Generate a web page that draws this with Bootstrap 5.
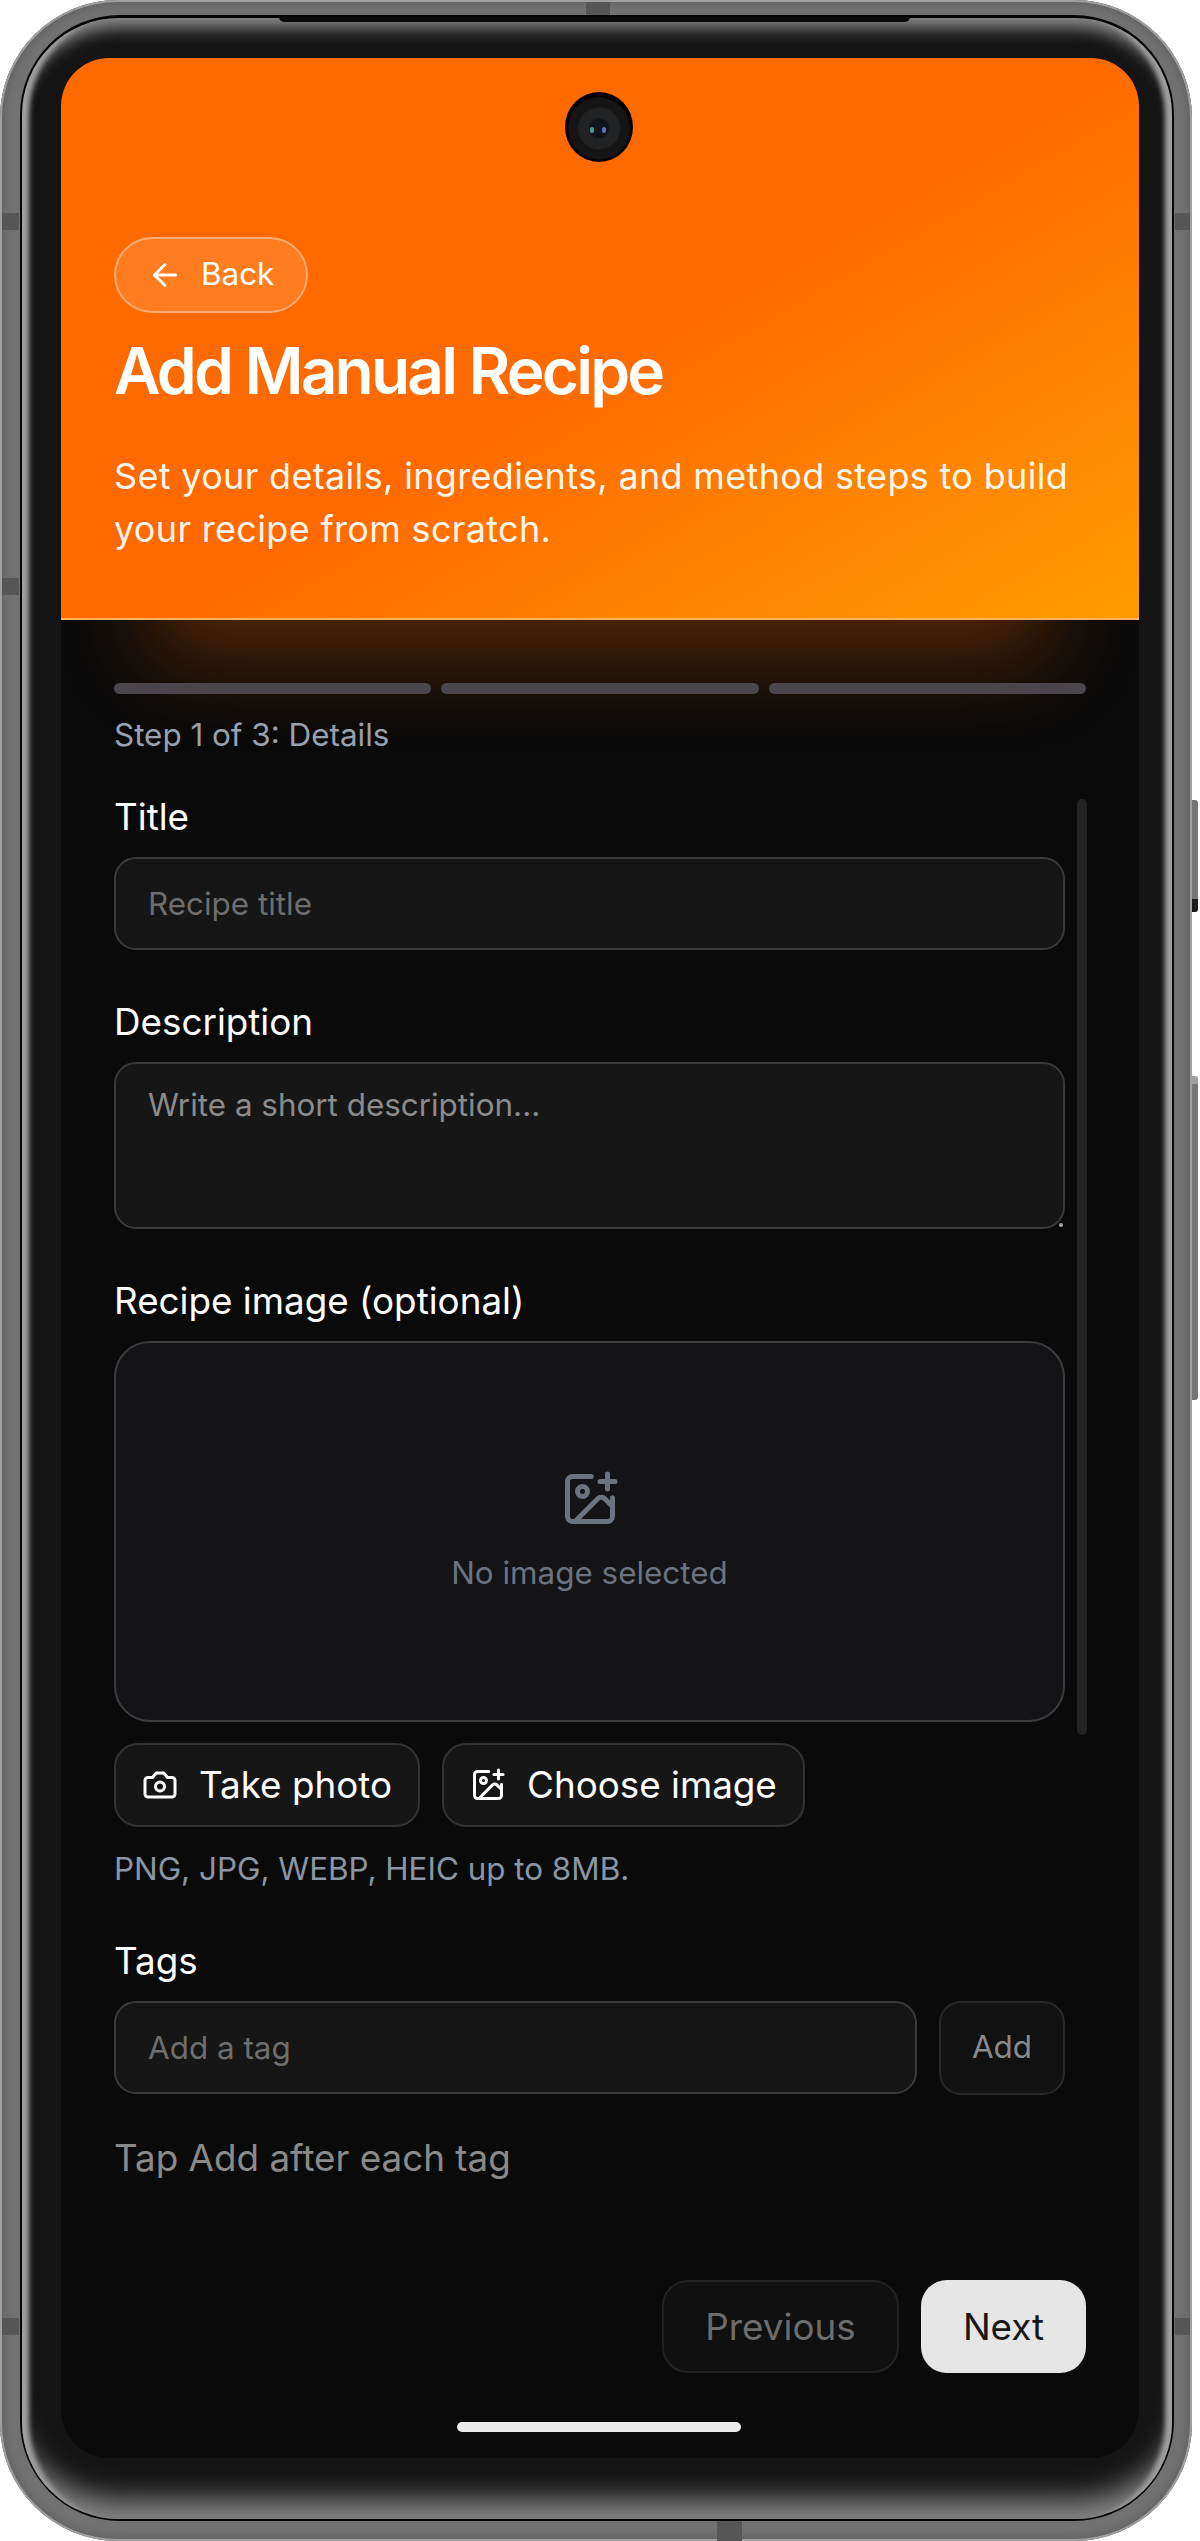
<!DOCTYPE html>
<html lang="en">

<head>
    <meta charset="UTF-8">
    <meta name="viewport" content="width=device-width, initial-scale=1.0">
    <title>Add Manual Recipe</title>
    <link href="https://cdn.jsdelivr.net/npm/bootstrap@5.3.0/dist/css/bootstrap.min.css" rel="stylesheet">
    <style>
        html, body { margin: 0; background: #fff; }
        body { font-family: Inter, "Liberation Sans", sans-serif; width: 1200px; height: 2541px; overflow: hidden; }

        .device-wrap { position: relative; width: 1192px; height: 2541px; }

        .side-key { position: absolute; left: 1192px; width: 6px; background: #767676; border-radius: 0 3px 3px 0; }
        .side-key.power { top: 800px; height: 112px; border-bottom: 13px solid #1c1c1c; }
        .side-key.volume { top: 1076px; height: 324px; border-top: 8px solid #a0a0a0; }

        .device-metal {
            position: relative; height: 100%; padding: 15px 18px 20px 20px;
            border-radius: 118px;
            background: #727272;
            box-shadow: inset 0 0 0 2px #a0a0a0, inset 0 0 10px 3px #5e5e5e;
        }
        .antenna { position: absolute; background: #565656; }
        .antenna.top-band { left: 586px; top: 2px; width: 24px; height: 13px; }
        .antenna.bottom-band { left: 717px; bottom: 0; width: 25px; height: 20px; }
        .antenna.left-a { left: 2px; top: 213px; width: 17px; height: 17px; }
        .antenna.left-b { left: 2px; top: 578px; width: 17px; height: 17px; }
        .antenna.left-c { left: 2px; top: 2318px; width: 17px; height: 17px; }
        .antenna.right-a { left: 1175px; top: 213px; width: 15px; height: 17px; }
        .antenna.right-b { left: 1175px; top: 2318px; width: 15px; height: 17px; }
        .top-notch { position: absolute; left: 279px; top: 17px; width: 631px; height: 5px; border-radius: 0 0 6px 6px; background: #0c0c0c; }

        .device-line { height: 100%; padding: 3px 2px 2px; border-radius: 100px; background: #050505; }
        .device-bezel {
            height: 100%; padding: 40px 33px 61px 39px;
            border-radius: 97px;
            background: #141414;
            box-shadow:
                inset 12px 0 5px -5px #a0a0a0,
                inset -12px 0 5px -5px #a0a0a0,
                inset 0 18px 16px -8px #8a8a8a,
                inset 0 -36px 28px -16px #858585;
        }

        .screen { position: relative; height: 100%; border-radius: 48px; background: #0a0a0a; color: #fff; overflow: hidden; display: flex; flex-direction: column; }

        .hero {
            height: 562px; padding: 179px 53px 0; flex-shrink: 0;
            background: linear-gradient(150deg, #ff6a00 52%, #ff9c00 100%);
            border-bottom: 2px solid #ffb35c;
            box-shadow: 0 130px 80px -90px rgba(255, 106, 0, .3);
        }
        .back-pill.btn {
            display: inline-flex; align-items: center; gap: 18px;
            height: 76px; padding: 0 32px 0 31px; color: #fff;
            font-size: 31.4px; line-height: 1;
            background: rgba(255, 255, 255, .12); border: 2px solid rgba(255, 255, 255, .38); border-radius: 38px;
        }
        .hero-title { font-size: 64px; font-weight: 600; line-height: 78px; letter-spacing: -2.8px; margin: 19px 0 0; color: #fff; }
        .hero-sub { font-size: 36px; line-height: 53px; letter-spacing: .33px; margin: 40px 0 0; color: rgba(255, 255, 255, .95); }

        .cam-hole { position: absolute; left: 504px; top: 34px; width: 68px; height: 70px; border-radius: 50%; background: radial-gradient(circle at 50% 52%, #111820 0, #0e141a 9px, #212224 11px, #212224 20px, #151516 22px, #151516 30px, #000 32px); }
        .cam-hole::before { content: ""; position: absolute; left: 25px; top: 35px; width: 4px; height: 6px; border-radius: 50%; background: #4d9a98; }
        .cam-hole::after { content: ""; position: absolute; left: 37px; top: 35px; width: 4px; height: 6px; border-radius: 50%; background: #5a78b5; }

        .form-area { flex: 1; padding: 63px 53px 0; min-height: 0; }
        .step-bars { display: flex; gap: 10px; }
        .step-seg { flex: 1; height: 11px; border-radius: 6px; background: #4a464b; }
        .step-text { font-size: 31.4px; line-height: 40px; color: #9aa1ae; margin: 21px 0 0; }
        .scroll-col { width: 951px; }

        .field-block { margin-top: 50px; }
        .field-block.first-block { margin-top: 40px; }
        .field-label { font-size: 36.8px; line-height: 44px; color: #fff; margin: 0 0 18px; display: block; font-weight: 400; }
        .dark-input.form-control {
            height: 93px; padding: 0 32px; font-size: 31.4px; color: #fff;
            background: #161616; border: 2px solid #3a3a3a; border-radius: 22px;
        }
        .dark-input.form-control::placeholder { color: #6e6e6e; opacity: 1; }
        .area-wrap { position: relative; }
        .area-wrap::after { content: ""; position: absolute; right: 2px; bottom: 2px; width: 4px; height: 4px; border-radius: 50%; background: #a8a8a8; }
        textarea.dark-input.form-control { height: 167px; padding: 21px 32px; line-height: 40px; resize: none; }
        textarea.dark-input.form-control::placeholder { color: #8b8b8b; }

        .image-box {
            height: 381px; border-radius: 36px; background: #141416; border: 2px solid #3c3c40;
            display: flex; flex-direction: column; align-items: center; color: #6b7280;
            font-size: 31.4px; line-height: 40px; padding-top: 126px;
        }
        .image-box svg { display: block; margin-bottom: 24px; }

        .action-row { display: flex; gap: 22px; }
        .photo-row { margin-top: 21px; }
        .dark-btn.btn {
            display: inline-flex; align-items: center; gap: 21px; height: 84px; padding: 0 26px 0 26px;
            font-size: 36.8px; color: #fff; background: #161616; border: 2px solid #333; border-radius: 24px; line-height: 1;
        }
        .hint-text { font-size: 31.4px; line-height: 40px; color: #8b95a3; margin: 22px 0 0; }
        .add-btn.btn { width: 126px; height: 94px; font-size: 31.4px; color: #8a8a8a; background: #111; border: 2px solid #282828; border-radius: 22px; }
        .tap-text { font-size: 36.8px; line-height: 46px; color: #8a8a8a; margin: 40px 0 0; }

        .thumb { position: absolute; left: 1016px; top: 741px; width: 10px; height: 936px; border-radius: 5px; background: #222423; }
        .nav-row { position: absolute; right: 53px; top: 2222px; display: flex; gap: 22px; }
        .prev-btn.btn { width: 237px; height: 93px; font-size: 36.8px; color: #6d6d6d; background: #101010; border: 2px solid #222; border-radius: 26px; }
        .next-btn.btn { width: 165px; height: 93px; font-size: 36.8px; color: #171717; background: #e5e5e5; border: 0; border-radius: 26px; }
        .home-bar { position: absolute; left: 396px; top: 2364px; width: 284px; height: 10px; border-radius: 5px; background: #ebebeb; }
    </style>
</head>

<body>
    <div class="device-wrap">
        <div class="side-key power"></div>
        <div class="side-key volume"></div>
        <div class="device-metal">
            <div class="antenna top-band"></div>
            <div class="antenna bottom-band"></div>
            <div class="antenna left-a"></div>
            <div class="antenna left-b"></div>
            <div class="antenna left-c"></div>
            <div class="antenna right-a"></div>
            <div class="antenna right-b"></div>
            <div class="top-notch"></div>
            <div class="device-line">
                <div class="device-bezel">
                    <div class="screen">
                        <div class="hero">
                            <button type="button" class="btn back-pill">
                                <svg width="36" height="36" viewBox="0 0 24 24" fill="none" stroke="currentColor" stroke-width="2" stroke-linecap="round" stroke-linejoin="round"><path d="M19 12H5"/><path d="m12 19-7-7 7-7"/></svg>
                                Back
                            </button>
                            <h1 class="hero-title">Add Manual Recipe</h1>
                            <p class="hero-sub">Set your details, ingredients, and method steps to build your recipe from scratch.</p>
                        </div>
                        <div class="cam-hole"></div>

                        <div class="form-area">
                            <div class="step-bars">
                                <div class="step-seg"></div>
                                <div class="step-seg"></div>
                                <div class="step-seg"></div>
                            </div>
                            <p class="step-text">Step 1 of 3: Details</p>

                            <div class="scroll-col">
                                <div class="field-block first-block">
                                    <label class="field-label">Title</label>
                                    <input type="text" class="form-control dark-input" placeholder="Recipe title">
                                </div>

                                <div class="field-block">
                                    <label class="field-label">Description</label>
                                    <div class="area-wrap">
                                        <textarea class="form-control dark-input" placeholder="Write a short description..."></textarea>
                                    </div>
                                </div>

                                <div class="field-block">
                                    <label class="field-label">Recipe image (optional)</label>
                                    <div class="image-box">
                                        <svg width="60" height="60" viewBox="0 0 24 24" fill="none" stroke="currentColor" stroke-width="2" stroke-linecap="round" stroke-linejoin="round"><path d="M16 5h6"/><path d="M19 2v6"/><path d="M21 11.5V19a2 2 0 0 1-2 2H5a2 2 0 0 1-2-2V5a2 2 0 0 1 2-2h7.5"/><path d="m21 15-3.086-3.086a2 2 0 0 0-2.828 0L6 21"/><circle cx="9" cy="9" r="2"/></svg>
                                        No image selected
                                    </div>

                                    <div class="action-row photo-row">
                                        <button type="button" class="btn dark-btn">
                                            <svg width="36" height="36" viewBox="0 0 24 24" fill="none" stroke="currentColor" stroke-width="2" stroke-linecap="round" stroke-linejoin="round"><path d="M14.5 4h-5L7 7H4a2 2 0 0 0-2 2v9a2 2 0 0 0 2 2h16a2 2 0 0 0 2-2V9a2 2 0 0 0-2-2h-3l-2.5-3z"/><circle cx="12" cy="13" r="3"/></svg>
                                            Take photo
                                        </button>
                                        <button type="button" class="btn dark-btn">
                                            <svg width="36" height="36" viewBox="0 0 24 24" fill="none" stroke="currentColor" stroke-width="2" stroke-linecap="round" stroke-linejoin="round"><path d="M16 5h6"/><path d="M19 2v6"/><path d="M21 11.5V19a2 2 0 0 1-2 2H5a2 2 0 0 1-2-2V5a2 2 0 0 1 2-2h7.5"/><path d="m21 15-3.086-3.086a2 2 0 0 0-2.828 0L6 21"/><circle cx="9" cy="9" r="2"/></svg>
                                            Choose image
                                        </button>
                                    </div>
                                    <p class="hint-text">PNG, JPG, WEBP, HEIC up to 8MB.</p>
                                </div>

                                <div class="field-block">
                                    <label class="field-label">Tags</label>
                                    <div class="action-row">
                                        <input type="text" class="form-control dark-input flex-grow-1" placeholder="Add a tag">
                                        <button type="button" class="btn add-btn flex-shrink-0">Add</button>
                                    </div>
                                    <p class="tap-text">Tap Add after each tag</p>
                                </div>
                            </div>
                        </div>

                        <div class="thumb"></div>
                        <div class="nav-row">
                            <button type="button" class="btn prev-btn">Previous</button>
                            <button type="button" class="btn next-btn">Next</button>
                        </div>
                        <div class="home-bar"></div>
                    </div>
                </div>
            </div>
        </div>
    </div>

    <script src="https://cdn.jsdelivr.net/npm/bootstrap@5.3.0/dist/js/bootstrap.bundle.min.js"></script>
</body>

</html>
